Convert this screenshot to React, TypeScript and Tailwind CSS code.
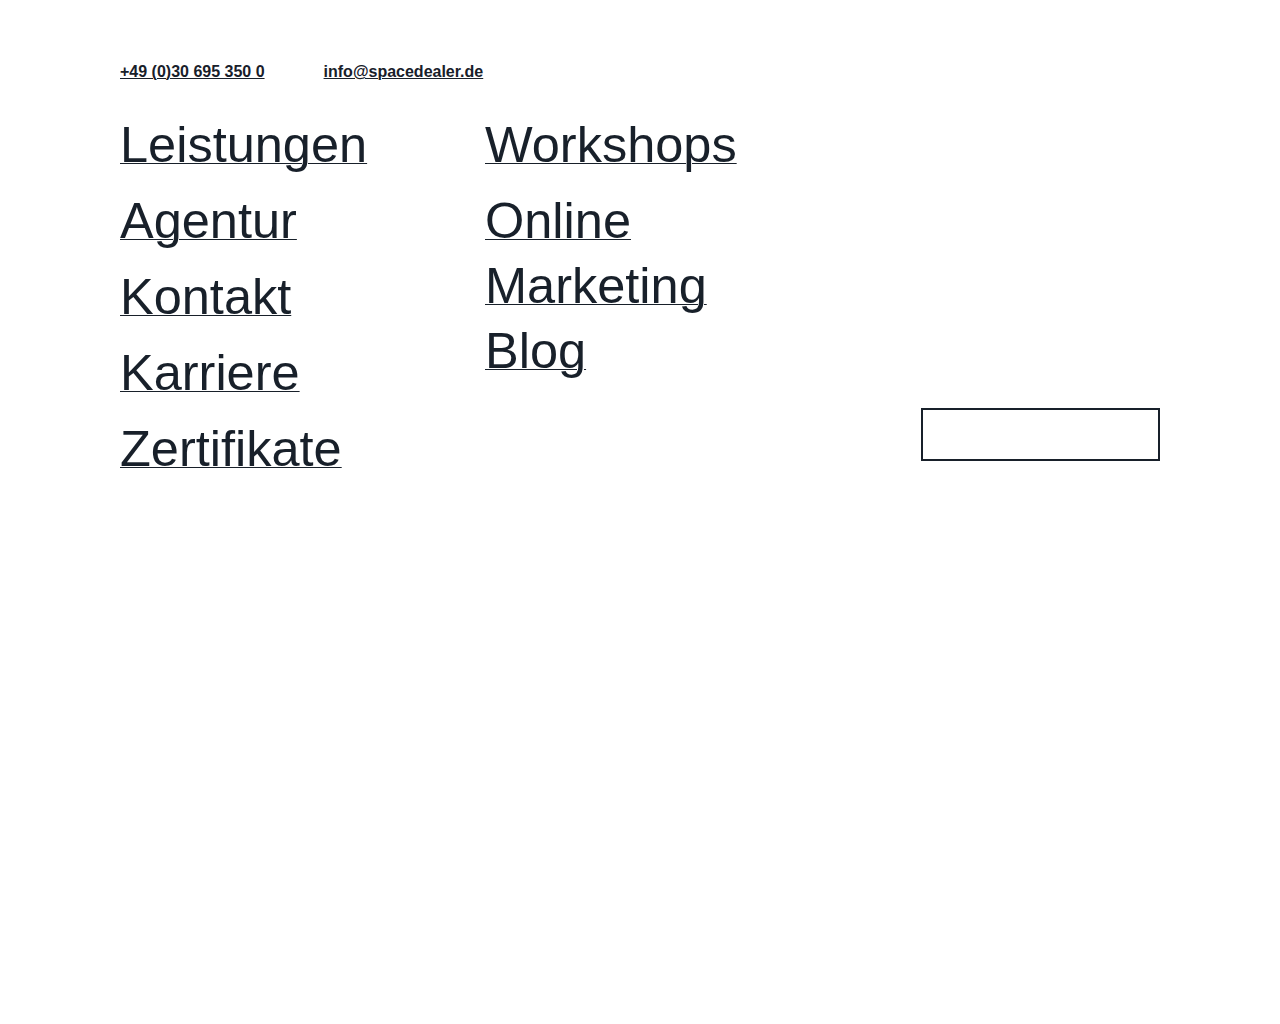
import React from 'react';

interface NavItem {
  label: string;
  spacing: string;
}

const leftLinks: NavItem[] = [
  { label: 'Leistungen', spacing: 'mb-[11px]' },
  { label: 'Agentur', spacing: 'mb-[11px]' },
  { label: 'Kontakt', spacing: 'mb-[11px]' },
  { label: 'Karriere', spacing: 'mb-[11px]' },
  { label: 'Zertifikate', spacing: '' },
];

// second column: the wrapped entry sits tight against the next one
const rightLinks: NavItem[] = [
  { label: 'Workshops', spacing: 'mb-[11px]' },
  { label: 'Online Marketing', spacing: '' },
  { label: 'Blog', spacing: '' },
];

const NavColumn: React.FC<{ items: NavItem[]; width: string }> = ({ items, width }) => (
  <ul className={`flex flex-col ${width}`}>
    {items.map((item) => (
      <li key={item.label} className={`text-[50.5px] leading-[65px] ${item.spacing}`}>
        <a href="#" className="underline decoration-1">
          {item.label}
        </a>
      </li>
    ))}
  </ul>
);

const App: React.FC = () => {
  return (
    <div
      className="min-h-screen bg-white px-[120px] pt-[60px] text-[#18202a]"
      style={{ fontFamily: '"Liberation Sans", Arial, sans-serif' }}
    >
      <div className="flex h-6 items-center gap-[59px] text-[16px] font-bold leading-6">
        <a href="#" className="underline decoration-1">
          +49 (0)30 695 350 0
        </a>
        <a href="#" className="underline decoration-1">
          info@spacedealer.de
        </a>
      </div>

      <div className="mt-[28px] flex items-start">
        <NavColumn items={leftLinks} width="w-[365px]" />
        <NavColumn items={rightLinks} width="w-[320px]" />
        <button className="ml-auto mt-[296px] h-[53px] w-[239px] border-2 border-[#18202a] bg-white" />
      </div>
    </div>
  );
};

export default App;
